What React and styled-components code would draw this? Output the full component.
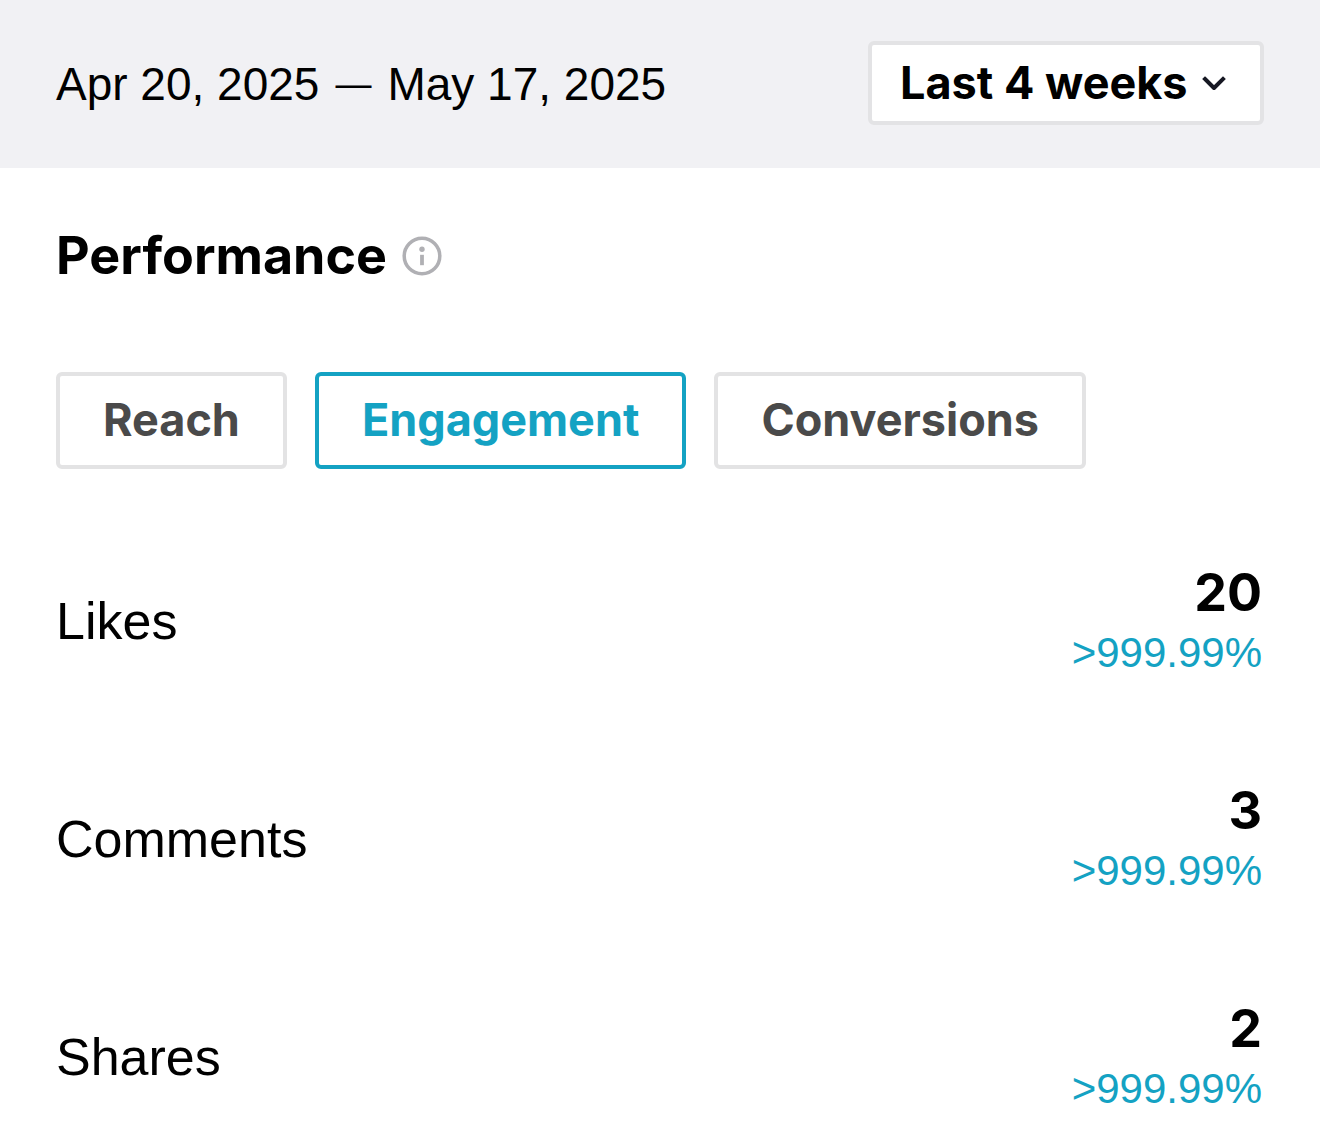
import React, { useState } from 'react';
import styled, { createGlobalStyle } from 'styled-components';

const GlobalStyle = createGlobalStyle`
  * {
    box-sizing: border-box;
  }
  body {
    margin: 0;
    background: #fff;
    color: #000;
    font-family: 'Liberation Sans', Arial, sans-serif;
  }
`;

// Grey bar with the date range and the period picker
const Toolbar = styled.header`
  display: flex;
  align-items: center;
  justify-content: space-between;
  height: 168px;
  padding: 0 56px 2px;
  background: #f1f1f4;
`;

const DateRange = styled.div`
  display: flex;
  align-items: center;
  gap: 16px;
  padding-top: 2px;
  font-size: 46px;
  line-height: 56px;
`;

const Dash = styled.span`
  font-size: 36px;
`;

// Frame of the drop-down, the chevron sits in its own column
const PeriodBox = styled.div`
  display: grid;
  grid-template-columns: 1fr 24px;
  align-items: center;
  height: 84px;
  padding: 0 34px 0 28px;
  border: 4px solid #e3e3e5;
  border-radius: 6px;
  background: #fff;
`;

const PeriodSelect = styled.select`
  grid-area: 1 / 1 / 2 / 3;
  appearance: none;
  padding: 0 38px 0 0;
  border: none;
  outline: none;
  background: transparent;
  color: #000;
  font-family: Inter, sans-serif;
  font-size: 45px;
  font-weight: 700;
  line-height: 56px;
  cursor: pointer;
`;

const Chevron = styled.svg`
  grid-area: 1 / 2 / 2 / 3;
  width: 24px;
  height: 24px;
  pointer-events: none;
`;

const Content = styled.main`
  padding: 56px 56px 0;
`;

const Heading = styled.div`
  display: flex;
  align-items: center;
  gap: 15px;
`;

const Title = styled.h1`
  margin: 0;
  font-family: Inter, sans-serif;
  font-size: 52px;
  font-weight: 700;
  line-height: 64px;
`;

const InfoButton = styled.button`
  display: flex;
  padding: 0;
  border: none;
  background: none;
  cursor: pointer;
`;

const Tabs = styled.div`
  display: flex;
  gap: 28px;
  margin-top: 84px;
`;

const Tab = styled.button`
  height: 97px;
  padding: 0 43px 2px;
  border: 4px solid ${(props) => (props.$active ? '#14a2c3' : '#e3e3e4')};
  border-radius: 6px;
  background: #fff;
  color: ${(props) => (props.$active ? '#14a2c3' : '#4a4a4a')};
  font-family: Inter, sans-serif;
  font-size: 45px;
  font-weight: 700;
  cursor: pointer;
`;

const Metrics = styled.dl`
  display: grid;
  gap: 98px;
  margin: 92px 0 0;
`;

const Metric = styled.div`
  display: flex;
  align-items: center;
  justify-content: space-between;
  height: 120px;
  padding-right: 2px;
`;

const Label = styled.dt`
  font-size: 52px;
  line-height: 64px;
`;

const Figures = styled.dd`
  margin: 0;
  text-align: right;
`;

const Value = styled.div`
  font-family: Inter, sans-serif;
  font-size: 52px;
  font-weight: 700;
  line-height: 64px;
`;

const Change = styled.div`
  color: #14a2c3;
  font-size: 42px;
  line-height: 56px;
`;

const tabs = ['Reach', 'Engagement', 'Conversions'];

const metrics = [
  { label: 'Likes', value: 20, change: '>999.99%' },
  { label: 'Comments', value: 3, change: '>999.99%' },
  { label: 'Shares', value: 2, change: '>999.99%' },
];

const App = () => {
  const [activeTab, setActiveTab] = useState('Engagement');

  return (
    <>
      <GlobalStyle />
      <Toolbar>
        <DateRange>
          <span>Apr 20, 2025</span>
          <Dash>—</Dash>
          <span>May 17, 2025</span>
        </DateRange>
        <PeriodBox>
          <PeriodSelect aria-label="Period">
            <option>Last 4 weeks</option>
          </PeriodSelect>
          <Chevron viewBox="0 0 24 24" fill="none" aria-hidden="true">
            <path d="M3 8l9 9 9-9" stroke="#161823" strokeWidth="4" strokeLinecap="square" strokeLinejoin="round" />
          </Chevron>
        </PeriodBox>
      </Toolbar>
      <Content>
        <Heading>
          <Title>Performance</Title>
          <InfoButton aria-label="About performance">
            <svg width="40" height="40" viewBox="0 0 40 40" fill="none">
              <circle cx="20" cy="20" r="17.8" stroke="#b0b0b4" strokeWidth="3.5" />
              <circle cx="20" cy="13.2" r="2.7" fill="#b0b0b4" />
              <path d="M20 18.8v10.4" stroke="#b0b0b4" strokeWidth="3.8" />
            </svg>
          </InfoButton>
        </Heading>
        <Tabs>
          {tabs.map((tab) => (
            <Tab key={tab} $active={tab === activeTab} aria-pressed={tab === activeTab} onClick={() => setActiveTab(tab)}>
              {tab}
            </Tab>
          ))}
        </Tabs>
        <Metrics>
          {metrics.map((metric) => (
            <Metric key={metric.label}>
              <Label>{metric.label}</Label>
              <Figures>
                <Value>{metric.value}</Value>
                <Change>{metric.change}</Change>
              </Figures>
            </Metric>
          ))}
        </Metrics>
      </Content>
    </>
  );
};

export default App;
